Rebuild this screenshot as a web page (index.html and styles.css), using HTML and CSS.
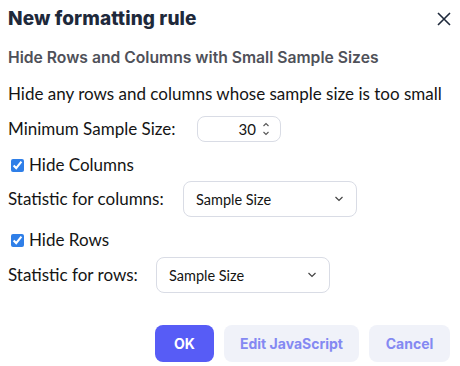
FILE: index.html
```html
<!DOCTYPE html>
<html>
<head>
<meta charset="utf-8">
<link rel="stylesheet" href="styles.css">
</head>
<body>
<div class="dialog">
  <div class="header">
    <h1 class="title">New formatting rule</h1>
    <button class="close" aria-label="Close">
      <svg width="16" height="16" viewBox="0 0 16 16"><path d="M2 2 L14 14 M14 2 L2 14" stroke="#1e293b" stroke-width="1.6" fill="none"/></svg>
    </button>
  </div>
  <h2 class="subtitle">Hide Rows and Columns with Small Sample Sizes</h2>
  <p class="desc">Hide any rows and columns whose sample size is too small</p>
  <div class="row row-min">
    <label class="lbl">Minimum Sample Size:</label>
    <div class="numbox">
      <span class="num">30</span>
      <svg class="spin" width="8" height="16" viewBox="0 0 8 16"><path d="M1.5 5 L4 2.5 L6.5 5 M1.5 11 L4 13.5 L6.5 11" stroke="#555" stroke-width="1.1" fill="none"/></svg>
    </div>
  </div>
  <label class="check"><input type="checkbox" checked><span>Hide Columns</span></label>
  <div class="row row-col">
    <label class="lbl">Statistic for columns:</label>
    <div class="select">
      <span>Sample Size</span>
      <svg width="10" height="6" viewBox="0 0 10 6"><path d="M1.5 1 L5 4.5 L8.5 1" stroke="#444" stroke-width="1.2" fill="none"/></svg>
    </div>
  </div>
  <label class="check"><input type="checkbox" checked><span>Hide Rows</span></label>
  <div class="row row-rows">
    <label class="lbl">Statistic for rows:</label>
    <div class="select">
      <span>Sample Size</span>
      <svg width="10" height="6" viewBox="0 0 10 6"><path d="M1.5 1 L5 4.5 L8.5 1" stroke="#444" stroke-width="1.2" fill="none"/></svg>
    </div>
  </div>
  <div class="actions">
    <button class="btn primary">OK</button>
    <button class="btn secondary wide">Edit JavaScript</button>
    <button class="btn secondary">Cancel</button>
  </div>
</div>
</body>
</html>
```
FILE: styles.css
```css
html, body { margin: 0; padding: 0; background: #fff; }
body { font-family: Lato, "Noto Sans", sans-serif; color: #141414; }
.dialog { padding: 8px 8px 0 8px; width: 444px; }
.header { display: flex; justify-content: space-between; align-items: center; height: 22px; }
.title { margin: 0; font-size: 19px; line-height: 22px; font-weight: 800; color: #1e293b; font-family: Inter, sans-serif; letter-spacing: 0.1px; }
.close { border: 0; background: none; padding: 0; width: 16px; height: 16px; display: flex; }
.subtitle { margin: 18px 0 0; font-size: 15.7px; line-height: 19px; font-weight: 600; color: #4f5159; font-family: Inter, sans-serif; }
.desc { margin: 17px 0 0; font-size: 17px; line-height: 20px; }
.row { display: flex; align-items: center; }
.lbl { font-size: 17px; line-height: 20px; }
.row-min { margin-top: 12px; }
.row-min .lbl { width: 189px; }
.numbox { width: 84px; height: 26px; box-sizing: border-box; border: 1px solid #d9dce5; border-radius: 8px; display: flex; align-items: center; justify-content: flex-end; padding-right: 10px; gap: 6px; font-size: 15px; }
.spin { display: block; }
.check { display: flex; align-items: center; font-size: 17px; line-height: 20px; margin-top: 12px; height: 22px; }
.check input { width: 13px; height: 13px; margin: 0 5px 0 3px; accent-color: #2f7fe8; }
.row-col { margin-top: 5px; }
.row-col .lbl { width: 175px; }
.row-rows { margin-top: 6px; }
.row-rows .lbl { width: 148px; }
.select { width: 174px; height: 36px; box-sizing: border-box; border: 1px solid #d9dce5; border-radius: 8px; display: flex; align-items: center; justify-content: space-between; padding: 0 12px 0 12px; font-size: 14.5px; }
.actions { display: flex; justify-content: flex-end; gap: 10px; margin-top: 32px; padding-right: 2px; }
.btn { height: 37px; border: 0; border-radius: 8px; font-family: Inter, sans-serif; font-weight: 700; font-size: 14px; padding: 0; }
.primary { background: #575cf6; color: #fff; width: 59px; }
.secondary { background: #f0f2f9; color: #8489f2; width: 81px; }
.wide { width: 135px; }
```
